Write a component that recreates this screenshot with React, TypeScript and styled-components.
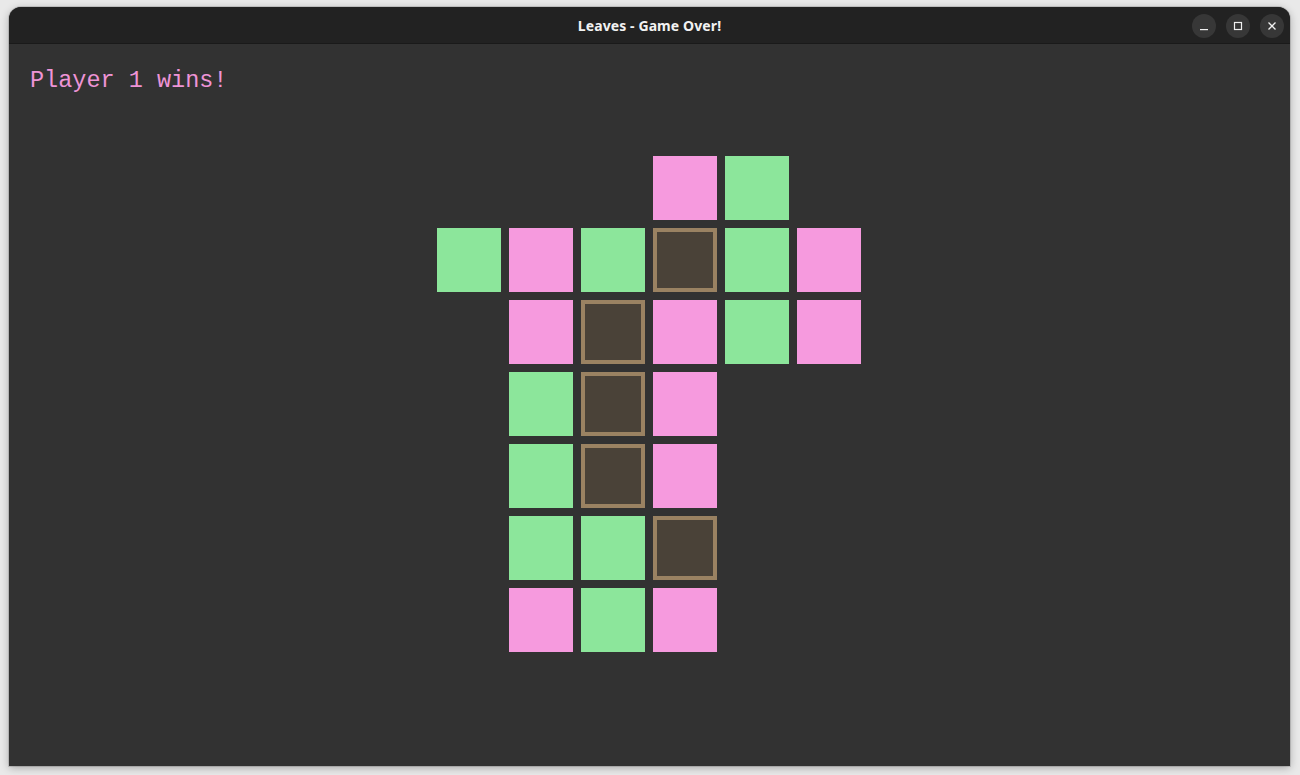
import styled, { createGlobalStyle } from 'styled-components';

const GlobalStyle = createGlobalStyle`
  html, body {
    margin: 0;
    padding: 0;
    background: #e9e9e9;
  }
  body {
    font-family: 'Noto Sans', 'DejaVu Sans', sans-serif;
  }
`;

type CellKind = 'pink' | 'green' | 'dead' | 'empty';

const BOARD: CellKind[][] = [
  ['empty', 'empty', 'empty', 'pink', 'green', 'empty'],
  ['green', 'pink', 'green', 'dead', 'green', 'pink'],
  ['empty', 'pink', 'dead', 'pink', 'green', 'pink'],
  ['empty', 'green', 'dead', 'pink', 'empty', 'empty'],
  ['empty', 'green', 'dead', 'pink', 'empty', 'empty'],
  ['empty', 'green', 'green', 'dead', 'empty', 'empty'],
  ['empty', 'pink', 'green', 'pink', 'empty', 'empty'],
];

const Page = styled.div`
  padding: 7px 10px 9px 9px;
`;

const Window = styled.div`
  width: 1281px;
  height: 759px;
  display: flex;
  flex-direction: column;
  background: #323232;
  border-radius: 12px 12px 0 0;
  overflow: hidden;
  box-shadow: 0 2px 8px rgba(0, 0, 0, 0.28), 0 0 0 1px rgba(0, 0, 0, 0.12);
`;

const TitleBar = styled.div`
  position: relative;
  height: 37px;
  flex: none;
  display: flex;
  align-items: center;
  justify-content: center;
  background: #222222;
  border-bottom: 1px solid #1a1a1a;
  box-sizing: border-box;
`;

const Title = styled.div`
  color: #f2f2f2;
  font-size: 14px;
  font-weight: 700;
  letter-spacing: 0.1px;
`;

const Controls = styled.div`
  position: absolute;
  right: 6px;
  top: 7px;
  display: flex;
  gap: 10px;
`;

const ControlButton = styled.div`
  width: 24px;
  height: 24px;
  border-radius: 50%;
  background: #373737;
  display: flex;
  align-items: center;
  justify-content: center;
  color: #f0f0f0;
`;

const Content = styled.div`
  flex: 1;
  padding: 23px 22px 0 21px;
  display: flex;
  flex-direction: column;
`;

const Status = styled.div`
  font-family: 'Liberation Mono', 'Courier New', monospace;
  font-size: 23.5px;
  line-height: 28px;
  color: #ee94d6;
`;

const Board = styled.div`
  margin: 61px auto 0;
  display: grid;
  grid-template-columns: repeat(6, 64px);
  grid-auto-rows: 64px;
  gap: 8px;
`;

const Cell = styled.div<{ $kind: CellKind }>`
  box-sizing: border-box;
  background: ${({ $kind }) =>
    $kind === 'pink'
      ? '#f69ade'
      : $kind === 'green'
      ? '#8ce69b'
      : $kind === 'dead'
      ? '#4a4238'
      : 'transparent'};
  border: ${({ $kind }) => ($kind === 'dead' ? '4px solid #9a8262' : 'none')};
`;

export default function App() {
  return (
    <>
      <GlobalStyle />
      <Page>
        <Window>
          <TitleBar>
            <Title>Leaves - Game Over!</Title>
            <Controls>
              <ControlButton>
                <svg width="10" height="10" viewBox="0 0 10 10">
                  <rect x="1" y="8" width="8" height="1.2" fill="currentColor" />
                </svg>
              </ControlButton>
              <ControlButton>
                <svg width="10" height="10" viewBox="0 0 10 10">
                  <rect x="1.5" y="1.5" width="7" height="7" fill="none" stroke="currentColor" strokeWidth="1.2" />
                </svg>
              </ControlButton>
              <ControlButton>
                <svg width="10" height="10" viewBox="0 0 10 10">
                  <path d="M1.5 1.5 L8.5 8.5 M8.5 1.5 L1.5 8.5" stroke="currentColor" strokeWidth="1.3" />
                </svg>
              </ControlButton>
            </Controls>
          </TitleBar>
          <Content>
            <Status>Player 1 wins!</Status>
            <Board>
              {BOARD.flatMap((row, r) =>
                row.map((kind, c) => <Cell key={`${r}-${c}`} $kind={kind} />)
              )}
            </Board>
          </Content>
        </Window>
      </Page>
    </>
  );
}
